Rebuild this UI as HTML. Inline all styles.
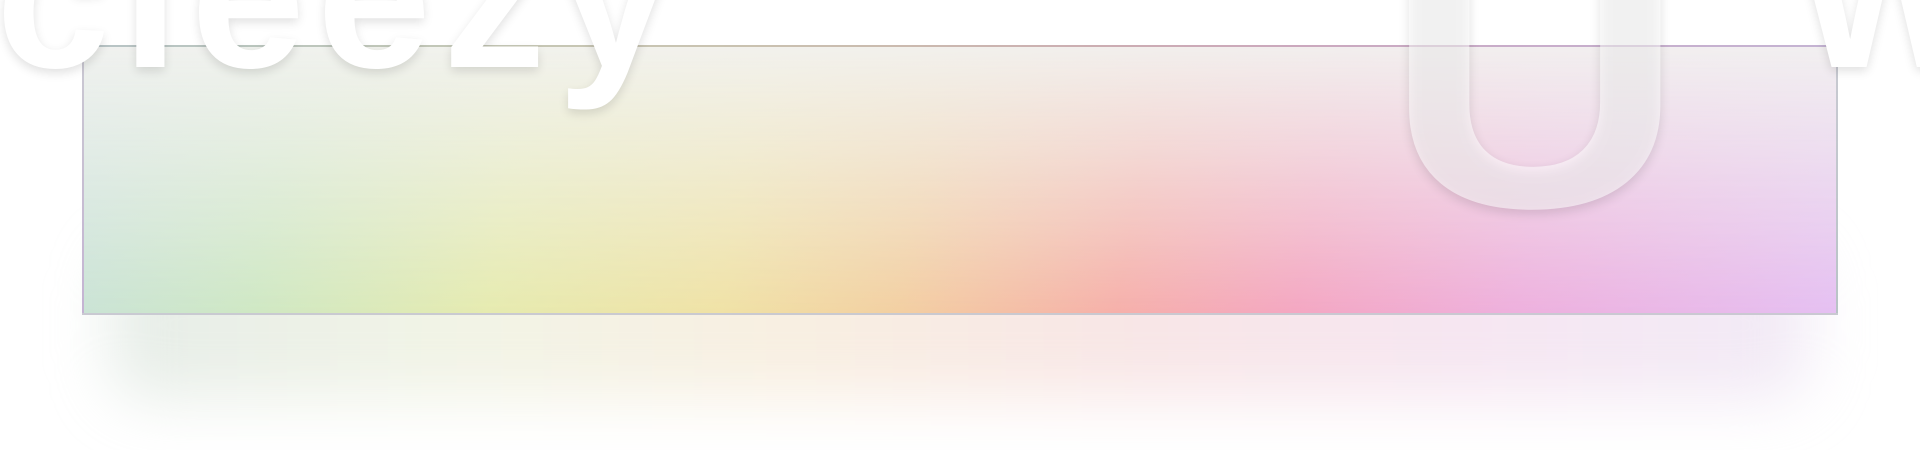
<!DOCTYPE html>
<html><head><meta charset="utf-8"><style>
html,body{margin:0;padding:0;width:1920px;height:450px;overflow:hidden;background:#fff;}
.t{position:absolute;font-family:"Liberation Sans",sans-serif;font-weight:bold;color:#fff;text-shadow:0 4px 10px rgba(0,0,0,0.12);white-space:nowrap;line-height:1;}
.shadow{position:absolute;left:110px;top:250px;width:1700px;height:150px;filter:blur(30px);
background:linear-gradient(to right,rgba(200,215,205,.45),rgba(225,230,200,.45),rgba(240,220,190,.45),rgba(240,200,200,.45),rgba(235,200,225,.45),rgba(225,210,235,.45));border-radius:40px;}
.box{position:absolute;left:82px;top:45px;width:1756px;height:270px;box-sizing:border-box;
border:2px solid rgba(170,170,185,.55);
background:
linear-gradient(to bottom,rgba(242,242,240,.95) 0%,rgba(242,242,240,.6) 40%,rgba(242,242,240,0) 100%),
linear-gradient(100deg,#c9e2da 0%,#cfe8c4 12%,#e6ebb0 25%,#f0e2a6 38%,#f3cfa2 48%,#f6b0aa 60%,#f4a7c2 70%,#eeb0dd 82%,#e5c0f2 100%);}
</style></head><body>
<div class="shadow"></div>
<div class="box"></div>
<div class="t" style="left:-4px;top:-106px;font-size:205px;letter-spacing:12px;">cleezy</div>
<div class="t" style="left:1384px;top:-115px;font-size:380px;transform:scaleX(1.1);transform-origin:left top;color:rgba(255,255,255,.55);">U</div>
<div class="t" style="left:1795px;top:-106px;font-size:205px;">W</div>
</body></html>
